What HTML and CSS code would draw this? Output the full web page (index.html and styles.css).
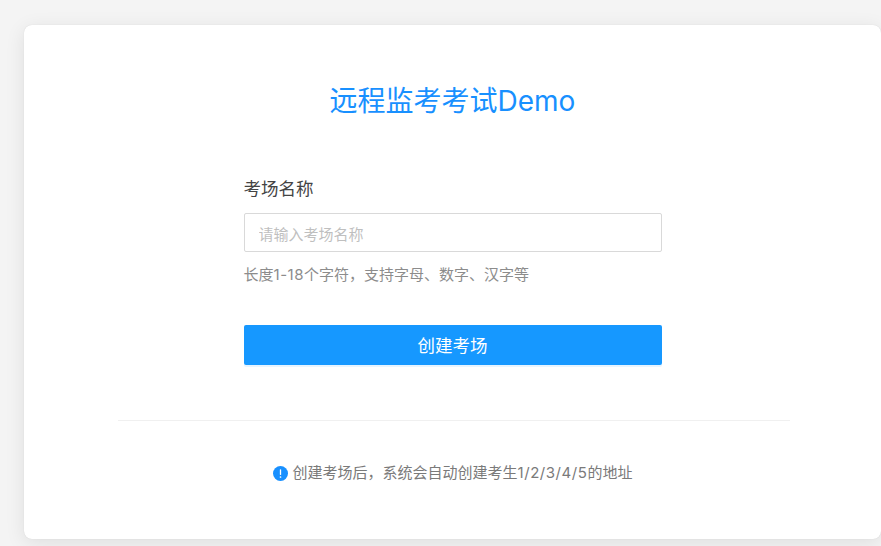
FILE: index.html
```html
<!DOCTYPE html>
<html lang="zh-CN">
<head>
<meta charset="utf-8">
<title>远程监考考试Demo</title>
<link rel="stylesheet" href="styles.css">
</head>
<body>
<main class="card">
  <h1 class="title">远程监考考试Demo</h1>
  <form class="form">
    <label class="label" for="room">考场名称</label>
    <input class="input" id="room" type="text" placeholder="请输入考场名称">
    <p class="hint">长度<span class="latin">1-18</span>个字符，支持字母、数字、汉字等</p>
    <button class="submit" type="button">创建考场</button>
  </form>
  <hr class="divider">
  <p class="note">
    <svg class="note-icon" viewBox="0 0 16 16" aria-hidden="true">
      <circle cx="8" cy="8" r="8" fill="#1890ff"/>
      <rect x="7.3" y="3.4" width="1.4" height="6.2" rx=".5" fill="#fff"/>
      <circle cx="8" cy="11.7" r=".9" fill="#fff"/>
    </svg>
    <span>创建考场后，系统会自动创建考生<span class="latin">1/2/3/4/5</span>的地址</span>
  </p>
</main>
</body>
</html>
```
FILE: styles.css
```css
* { box-sizing: border-box; }
html, body { margin: 0; height: 100%; }
body {
  background: #f4f4f4;
  font-family: Inter, "Noto Sans CJK SC", "Liberation Sans", sans-serif;
  overflow: hidden;
  padding: 25px 0 7px 24px;
}
.card {
  height: 514px;
  background: #fff;
  border-radius: 8px;
  box-shadow: 0 0 1px rgba(0, 0, 0, 0.14), 0 4px 20px rgba(0, 0, 0, 0.09);
  display: flex;
  flex-direction: column;
  align-items: center;
  padding-top: 55px;
}
.title {
  margin: 0;
  font-size: 28px;
  font-weight: 400;
  line-height: 42px;
  color: #1890ff;
}
.form {
  width: 418px;
  margin-top: 53px;
  display: flex;
  flex-direction: column;
}
.label {
  font-size: 17.5px;
  line-height: 28px;
  color: #444;
}
.input {
  height: 39px;
  margin-top: 10px;
  padding: 3px 14px 0;
  border: 1px solid #d9d9d9;
  border-radius: 2px;
  outline: none;
  font: inherit;
  font-size: 15px;
  color: #333;
}
.input::placeholder { color: #bfbfbf; opacity: 1; }
.hint {
  margin: 11px 0 0;
  font-size: 15px;
  line-height: 24px;
  color: #8c8c8c;
}
.latin { letter-spacing: 0.55px; }
.submit {
  height: 40px;
  margin-top: 38px;
  padding: 0 0 2px;
  border: 0;
  border-radius: 2px;
  background: #1698ff;
  box-shadow: 0 2px 0 rgba(24, 144, 255, 0.1);
  color: #fff;
  font: inherit;
  font-size: 17.5px;
}
.divider {
  width: 672px;
  height: 1px;
  margin: 55px 0 0 3px;
  border: 0;
  background: #f0f0f0;
}
.note {
  margin: 40px 0 0;
  display: flex;
  align-items: center;
  gap: 5px;
  font-size: 15px;
  line-height: 24px;
  color: #7a7a7a;
}
.note-icon { width: 15px; height: 15px; flex: none; }
```
